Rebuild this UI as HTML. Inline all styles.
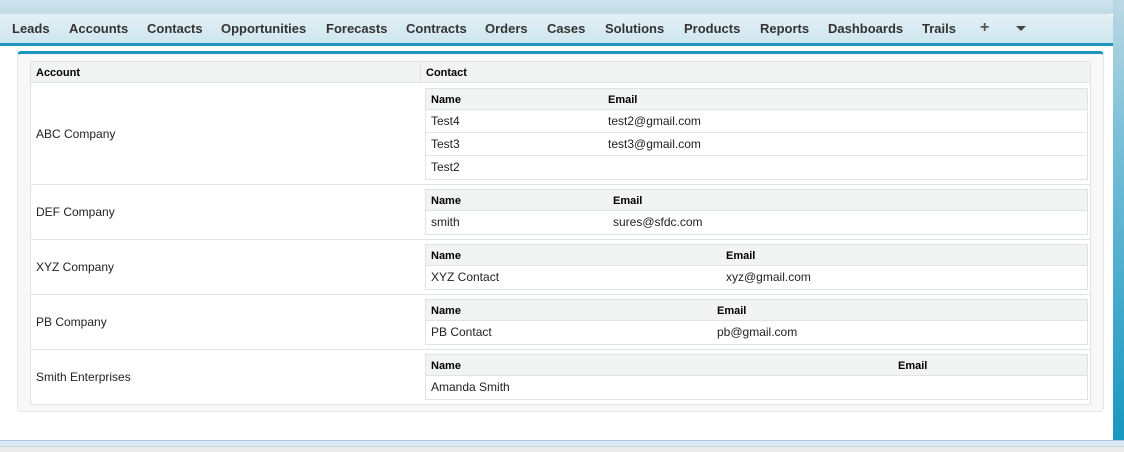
<!DOCTYPE html>
<html><head><style>
*{margin:0;padding:0;box-sizing:border-box}
body{width:1124px;height:452px;overflow:hidden;position:relative;font-family:"Liberation Sans",Arial,sans-serif;background:#fff}
.a{position:absolute}
.tab{position:absolute;top:21px;font-size:13px;font-weight:bold;color:#333}
.t{font-size:12px;color:#222;position:absolute}
.h{font-size:11px;font-weight:bold;color:#000;position:absolute}
.it{position:absolute;left:425px;width:663px;border:1px solid #e0e3e5;background:#fff}
.ih{height:21px;background:#f2f3f3;border-bottom:1px solid #e0e3e5;position:relative}
.ir{height:23px;border-bottom:1px solid #e3e3e3;position:relative}
.ir:last-child{border-bottom:none}
.ih span,.ir span{position:absolute}
.ih span{font-size:11px;font-weight:bold;color:#000;top:5px}
.ir span{font-size:12px;color:#222;top:4px}
.row{position:absolute;left:31px;width:1059px;border-top:1px solid #e0e3e5}
</style></head><body>
<div class="a" style="left:0;top:0;width:1124px;height:14px;background:linear-gradient(#cfe3ec,#c2dbe6)"></div>
<div class="a" style="left:1113px;top:0;width:11px;height:440px;background:linear-gradient(#bcd8e4,#7cc0d8 30%,#1797c0)"></div>
<div class="a" style="left:0;top:14px;width:1113px;height:29px;background:linear-gradient(#e2f0f5,#cfe6ee);border-top-right-radius:5px"></div>
<div class="a" style="left:0;top:43px;width:1113px;height:3px;background:#1f96c1"></div>
<div class="tab" style="left:12px">Leads</div>
<div class="tab" style="left:69px">Accounts</div>
<div class="tab" style="left:147px">Contacts</div>
<div class="tab" style="left:221px">Opportunities</div>
<div class="tab" style="left:326px">Forecasts</div>
<div class="tab" style="left:406px">Contracts</div>
<div class="tab" style="left:485px">Orders</div>
<div class="tab" style="left:547px">Cases</div>
<div class="tab" style="left:605px">Solutions</div>
<div class="tab" style="left:684px">Products</div>
<div class="tab" style="left:760px">Reports</div>
<div class="tab" style="left:828px">Dashboards</div>
<div class="tab" style="left:922px">Trails</div>
<div class="tab" style="left:980px;top:19px;font-size:16px;color:#555">+</div>
<div class="a" style="left:1016px;top:26px;width:0;height:0;border-left:5px solid transparent;border-right:5px solid transparent;border-top:5px solid #444"></div>

<div class="a" style="left:17px;top:51px;width:1087px;height:361px;background:#f8f8f8;border:1px solid #e6e6e6;border-top:3px solid #1f96c1;border-radius:4px"></div>
<div class="a" style="left:30px;top:61px;width:1061px;height:344px;background:#fff;border:1px solid #e0e3e5"></div>
<div class="a" style="left:31px;top:62px;width:1059px;height:21px;background:#f2f3f3;border-bottom:1px solid #e0e3e5"></div>
<div class="a" style="left:420px;top:62px;width:1px;height:21px;background:#e0e3e5"></div>
<div class="h" style="left:36px;top:67px">Account</div>
<div class="h" style="left:426px;top:67px">Contact</div>

<div class="row" style="top:184px"></div>
<div class="row" style="top:239px"></div>
<div class="row" style="top:294px"></div>
<div class="row" style="top:349px"></div>

<div class="t" style="left:36px;top:127px">ABC Company</div>
<div class="t" style="left:36px;top:205px">DEF Company</div>
<div class="t" style="left:36px;top:260px">XYZ Company</div>
<div class="t" style="left:36px;top:315px">PB Company</div>
<div class="t" style="left:36px;top:370px">Smith Enterprises</div>

<div class="it" style="top:88px"><div class="ih"><span style="left:5px">Name</span><span style="left:182px">Email</span></div>
<div class="ir"><span style="left:5px">Test4</span><span style="left:182px">test2@gmail.com</span></div>
<div class="ir"><span style="left:5px">Test3</span><span style="left:182px">test3@gmail.com</span></div>
<div class="ir"><span style="left:5px">Test2</span></div></div>

<div class="it" style="top:189px"><div class="ih"><span style="left:5px">Name</span><span style="left:187px">Email</span></div>
<div class="ir"><span style="left:5px">smith</span><span style="left:187px">sures@sfdc.com</span></div></div>

<div class="it" style="top:244px"><div class="ih"><span style="left:5px">Name</span><span style="left:300px">Email</span></div>
<div class="ir"><span style="left:5px">XYZ Contact</span><span style="left:300px">xyz@gmail.com</span></div></div>

<div class="it" style="top:299px"><div class="ih"><span style="left:5px">Name</span><span style="left:291px">Email</span></div>
<div class="ir"><span style="left:5px">PB Contact</span><span style="left:291px">pb@gmail.com</span></div></div>

<div class="it" style="top:354px"><div class="ih"><span style="left:5px">Name</span><span style="left:472px">Email</span></div>
<div class="ir"><span style="left:5px">Amanda Smith</span></div></div>

<div class="a" style="left:0;top:440px;width:1124px;height:1px;background:#a8c8ea"></div>
<div class="a" style="left:0;top:441px;width:1124px;height:5px;background:#dde8f5"></div>
<div class="a" style="left:0;top:446px;width:1124px;height:6px;background:#ebebeb;border-top:1px solid #c9d3de"></div>
</body></html>
